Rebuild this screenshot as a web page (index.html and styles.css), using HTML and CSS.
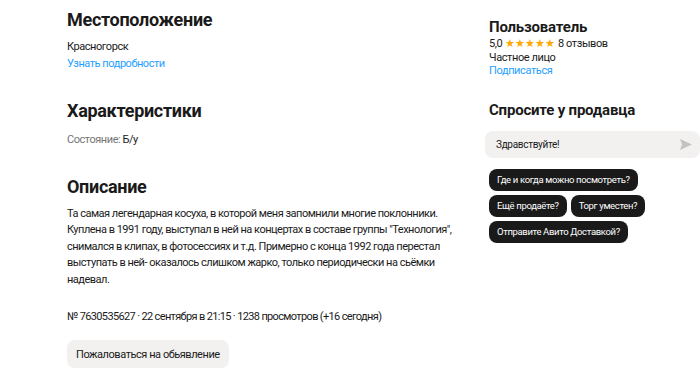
FILE: index.html
```html
<!DOCTYPE html>
<html lang="ru">
<head>
<meta charset="utf-8">
<link rel="stylesheet" href="styles.css">
</head>
<body>
<div class="page">
  <main class="main">
    <section class="block">
      <h2 class="title">Местоположение</h2>
      <div class="text">Красногорск</div>
      <a class="link">Узнать подробности</a>
    </section>
    <section class="block block-spec">
      <h2 class="title title-spec">Характеристики</h2>
      <div class="text"><span class="muted">Состояние:</span> Б/у</div>
    </section>
    <section class="block block-desc">
      <h2 class="title">Описание</h2>
      <p class="desc">Та самая легендарная косуха, в которой меня запомнили многие поклонники. Куплена в 1991 году, выступал в ней на концертах в составе группы "Технология", снимался в клипах, в фотосессиях и т.д. Примерно с конца 1992 года перестал выступать в ней- оказалось слишком жарко, только периодически на сьёмки надевал.</p>
    </section>
    <div class="meta">№ 7630535627 · 22 сентября в 21:15 · 1238 просмотров (+16 сегодня)</div>
    <button class="report">Пожаловаться на обьявление</button>
  </main>
  <aside class="side">
    <div class="user">
      <h3 class="side-title">Пользователь</h3>
      <div class="rating">5,0 <span class="stars">★★★★★</span> 8 отзывов</div>
      <div class="stext">Частное лицо</div>
      <a class="link">Подписаться</a>
    </div>
    <h3 class="side-title ask">Спросите у продавца</h3>
    <div class="input">
      <span>Здравствуйте!</span>
      <svg class="send" width="12" height="11" viewBox="0 0 12 11"><path d="M0 0 L12 5.5 L0 11 L2 5.5 Z" fill="#c2c2c2"/></svg>
    </div>
    <div class="chips">
      <span class="chip">Где и когда можно посмотреть?</span>
      <span class="chip">Ещё продаёте?</span>
      <span class="chip">Торг уместен?</span>
      <span class="chip">Отправите Авито Доставкой?</span>
    </div>
  </aside>
</div>
</body>
</html>
```
FILE: styles.css
```css
* { box-sizing: border-box; }
body {
  margin: 0;
  font-family: Roboto, "Noto Sans", sans-serif;
  color: #1a1a1a;
  background: #fff;
}
.page {
  display: flex;
  padding-left: 67px;
}
.main {
  width: 422px;
  padding-top: 8px;
}
.block { margin-bottom: 27px; }
.block-spec { margin-bottom: 26px; }
.block-desc { margin-bottom: 21px; }
.title {
  margin: 0 0 7px;
  font-size: 18px;
  line-height: 24px;
  font-weight: 700;
  letter-spacing: -0.3px;
}
.title-spec { margin-bottom: 9px; }
.text, .link {
  display: block;
  font-size: 11px;
  line-height: 16.5px;
  letter-spacing: -0.45px;
}
.link { color: #1f9fff; }
.muted { color: #757575; }
.desc {
  margin: 0;
  max-width: 392px;
  font-size: 11px;
  line-height: 16.5px;
  letter-spacing: -0.5px;
}
.meta {
  font-size: 11px;
  line-height: 16px;
  letter-spacing: -0.65px;
}
.report {
  margin-top: 15px;
  height: 28px;
  padding: 0 9px;
  border: 0;
  border-radius: 8px;
  background: #f2f1f0;
  font-family: inherit;
  font-size: 11px;
  letter-spacing: -0.45px;
  color: #1a1a1a;
}
.side {
  flex: 1;
  padding-top: 17px;
}
.side-title {
  margin: 0;
  font-size: 15px;
  line-height: 20px;
  font-weight: 700;
  letter-spacing: -0.2px;
}
.rating, .stext {
  font-size: 11px;
  line-height: 13.5px;
  letter-spacing: -0.4px;
}
.user .link { line-height: 14px; letter-spacing: -0.4px; }
.stars { color: #ffa800; font-size: 10.5px; letter-spacing: 0.2px; }
.ask { margin-top: 22px; }
.input {
  display: flex;
  align-items: center;
  justify-content: space-between;
  margin: 11px 0 0 -4px;
  height: 27px;
  padding: 0 8px 0 11px;
  border-radius: 8px;
  background: #f2f1f0;
  font-size: 10px;
  letter-spacing: -0.3px;
}
.chips {
  display: flex;
  flex-wrap: wrap;
  gap: 4px;
  margin-top: 11px;
  width: 168px;
}
.chip {
  height: 22px;
  line-height: 22px;
  padding: 0 8px;
  border-radius: 8px;
  background: #1a1a1a;
  color: #fff;
  font-size: 9.5px;
  letter-spacing: -0.35px;
}
```
